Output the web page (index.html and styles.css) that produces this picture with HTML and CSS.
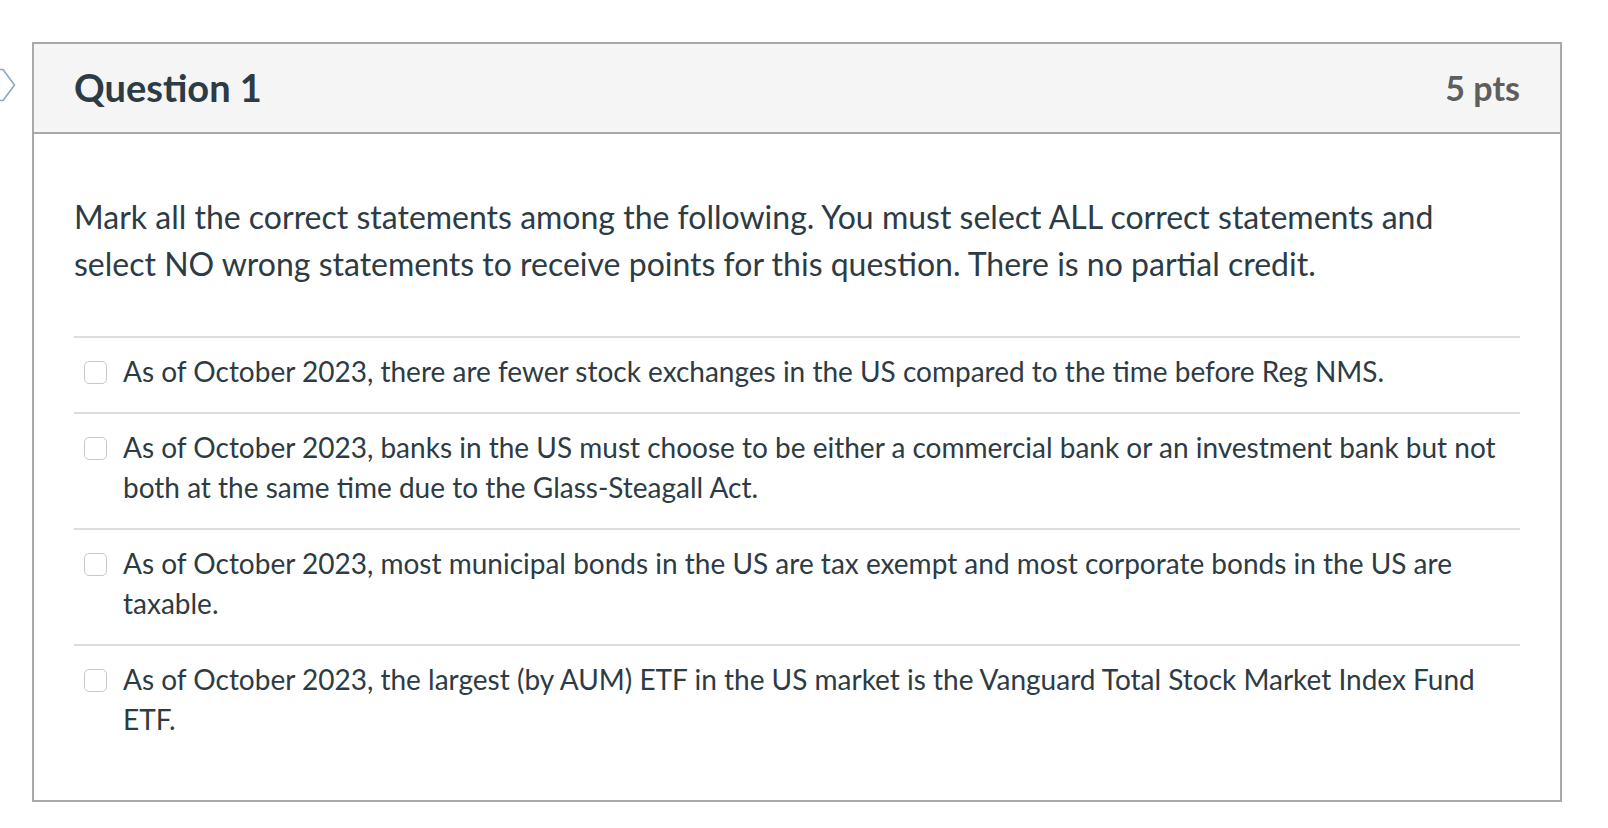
FILE: index.html
```html
<!DOCTYPE html>
<html lang="en">
<head>
<meta charset="utf-8">
<title>Question 1</title>
<link rel="stylesheet" href="styles.css">
</head>
<body>
<div class="page">
  <div class="gutter">
    <svg class="nav-chevron" width="16" height="36" viewBox="0 0 16 36" aria-hidden="true">
      <polygon points="-12,1.5 3,1.5 14.5,17 3,32.5 -12,32.5 -0.5,17" fill="#ffffff" stroke="#8ea7c2" stroke-width="1.6" stroke-linejoin="round"/>
    </svg>
  </div>
  <div class="question">
    <div class="question-header">
      <h2 class="question-title">Question 1</h2>
      <span class="question-points">5 pts</span>
    </div>
    <div class="question-body">
      <p class="question-text">Mark all the correct statements among the following. You must select ALL correct statements and select NO wrong statements to receive points for this question. There is no partial credit.</p>
      <div class="answers">
        <label class="answer">
          <span class="checkbox"></span>
          <span class="answer-text">As of October 2023, there are fewer stock exchanges in the US compared to the time before Reg NMS.</span>
        </label>
        <label class="answer">
          <span class="checkbox"></span>
          <span class="answer-text">As of October 2023, banks in the US must choose to be either a commercial bank or an investment bank but not both at the same time due to the Glass-Steagall Act.</span>
        </label>
        <label class="answer">
          <span class="checkbox"></span>
          <span class="answer-text">As of October 2023, most municipal bonds in the US are tax exempt and most corporate bonds in the US are taxable.</span>
        </label>
        <label class="answer">
          <span class="checkbox"></span>
          <span class="answer-text">As of October 2023, the largest (by AUM) ETF in the US market is the Vanguard Total Stock Market Index Fund ETF.</span>
        </label>
      </div>
    </div>
  </div>
</div>
</body>
</html>
```

FILE: styles.css
```css
* {
  box-sizing: border-box;
}

html, body {
  margin: 0;
  padding: 0;
  background: #ffffff;
}

body {
  font-family: Lato, "Open Sans", "Liberation Sans", sans-serif;
  color: #2d3b45;
}

.page {
  display: flex;
  align-items: flex-start;
  padding-top: 42px;
}

.gutter {
  width: 32px;
  flex: 0 0 32px;
  padding-top: 26px;
}

.nav-chevron {
  display: block;
}

.question {
  width: 1530px;
  border: 2px solid #a9a9a9;
  background: #ffffff;
}

.question-header {
  display: flex;
  align-items: center;
  justify-content: space-between;
  height: 90px;
  padding: 0 40px 0 40px;
  background: #f5f5f5;
  border-bottom: 2px solid #a9a9a9;
}

.question-title {
  margin: 0;
  font-size: 38px;
  font-weight: 700;
  color: #2d3b45;
  line-height: 1.2;
}

.question-points {
  font-size: 34px;
  font-weight: 700;
  color: #5e5e5e;
  line-height: 1.2;
}

.question-body {
  padding: 59px 40px 40px 40px;
}

.question-text {
  margin: 0 0 49px 0;
  padding-right: 60px;
  font-size: 32px;
  line-height: 47px;
}

.answers {
  display: flex;
  flex-direction: column;
}

.answer {
  display: flex;
  align-items: flex-start;
  border-top: 2px solid #dddddd;
  padding: 13px 15px 21px 10px;
}

.checkbox {
  flex: 0 0 23px;
  width: 23px;
  height: 23px;
  margin-top: 10px;
  margin-right: 16px;
  border: 1px solid #c4c9cd;
  border-radius: 5px;
  background: #ffffff;
}

.answer-text {
  font-size: 28px;
  line-height: 40px;
}
```
